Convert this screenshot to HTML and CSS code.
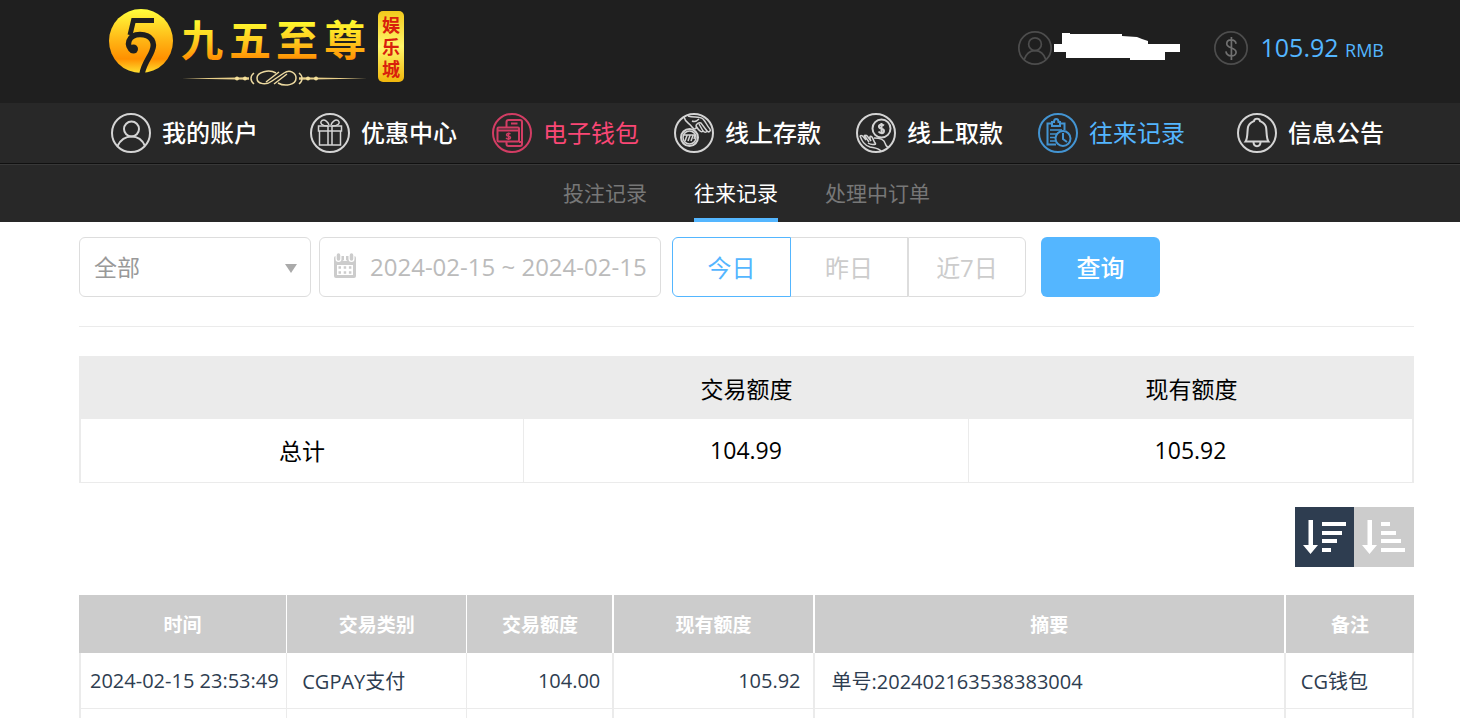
FILE: index.html
```html
<!DOCTYPE html>
<html lang="zh-CN">
<head>
  <meta charset="UTF-8">
  <meta name="viewport" content="width=device-width, initial-scale=1.0">
  <title>九五至尊娱乐城 - 往来记录</title>
  <link rel="stylesheet" href="styles.css">
</head>
<body>

  <!-- 顶部 -->
  <header class="topbar">
    <a class="logo" href="#" aria-label="九五至尊娱乐城">
      <svg width="300" height="84" viewBox="0 0 300 84">
        <defs>
          <linearGradient id="gold" x1="0" y1="0" x2="0" y2="1">
            <stop offset="0" stop-color="#ffff3c"/>
            <stop offset="0.5" stop-color="#ffb414"/>
            <stop offset="0.78" stop-color="#ff9000"/>
            <stop offset="1" stop-color="#ffe030"/>
          </linearGradient>
          <linearGradient id="goldText" gradientUnits="userSpaceOnUse" x1="0" y1="14" x2="0" y2="56">
            <stop offset="0" stop-color="#ffff30"/>
            <stop offset="0.5" stop-color="#ffcf20"/>
            <stop offset="1" stop-color="#ff8a00"/>
          </linearGradient>
          <linearGradient id="plate" x1="0" y1="0" x2="0" y2="1">
            <stop offset="0" stop-color="#f2c91c"/>
            <stop offset="0.5" stop-color="#fff66a"/>
            <stop offset="1" stop-color="#f0b60c"/>
          </linearGradient>
        </defs>
        <circle cx="32" cy="36" r="32" fill="url(#gold)"/>
        <g fill="none" stroke="#1f1f1f">
          <path d="M45 15.500H24.500L21 30" stroke-width="5"/>
          <path d="M24 46C16 41 19 29.500 31 29.500C43 29.500 46.500 38 43 46C41 52 35 58 33 69" stroke-width="5.500"/>
        </g>
        <circle cx="24.500" cy="44" r="4.500" fill="#1f1f1f"/>
        <g class="logo-name" fill="url(#goldText)">
          <text x="72" y="51">九</text>
          <text x="120" y="51">五</text>
          <text x="167" y="51">至</text>
          <text x="215" y="51">尊</text>
        </g>
        <path d="M73 73.500L140 72.300V74.700ZM258 73.500L190 72.300V74.700Z" fill="#e8cf8a"/>
        <g fill="none" stroke="#ecd9a0" stroke-width="1.500">
          <path d="M167 68C160 64 148 67 148 73C148 80 158 80 163 76L175 68C181 64 187 68 187 73C187 80 176 82 169 78"/>
          <path d="M157 77L170 67M165 79L178 69"/>
          <path d="M145 68C141 71 141 76 145 79M190 68C194 71 194 76 190 79"/>
        </g>
        <g fill="#f4e09a">
          <circle cx="128" cy="73.500" r="2"/><circle cx="136" cy="73.500" r="2"/>
          <circle cx="199" cy="73.500" r="2"/><circle cx="207" cy="73.500" r="2"/>
        </g>
        <rect x="269" y="6" width="26" height="71" rx="5" fill="url(#plate)"/>
        <g class="logo-tag">
          <text x="273" y="27">娱</text>
          <text x="273" y="49">乐</text>
          <text x="273" y="71">城</text>
        </g>
      </svg>
    </a>

    <div class="account">
      <svg class="round-icon" viewBox="0 0 40 40" width="34" height="34">
        <circle cx="20" cy="20" r="19"/>
        <circle cx="20" cy="15.500" r="7.500"/>
        <path d="M7 34C10 25 15 23 20 23S30 25 33 34"/>
      </svg>
      <svg class="masked-name" viewBox="0 0 126 28" width="126" height="28">
        <path d="M8 0H16V1H68V3L83 4L88 6L94 8V11H126V19H111V27H76V25H12V19H0V11H8Z" fill="#fff"/>
      </svg>
      <svg class="round-icon money" viewBox="0 0 40 40" width="34" height="34">
        <circle cx="20" cy="20" r="19"/>
        <path d="M26 15C25 9 15 9 15 15S26 19 26 25S15 31 14 24M20.500 7V34"/>
      </svg>
      <span class="balance">105.92 <small>RMB</small></span>
    </div>
  </header>

  <!-- 主导航 -->
  <nav class="main-nav">
    <a href="#">
      <svg viewBox="0 0 40 40" width="40" height="40">
        <circle cx="20" cy="20" r="19"/>
        <circle cx="20.500" cy="16" r="7.500"/>
        <path d="M6.500 33C10 26 15 23.500 20.500 23.500S31 26 34 33"/>
      </svg>
      <span>我的账户</span>
    </a>
    <a href="#">
      <svg viewBox="0 0 40 40" width="40" height="40">
        <circle cx="20" cy="20" r="19"/>
        <g class="thin">
          <path d="M8.500 13H31.500V18H8.500ZM9.500 18V32H30.500V18M18 13V32M22 13V32"/>
          <path d="M18 13C12 13 9 10 12 7.500C15 6 18 9 19 12M22 13C28 13 31 10 28 7.500C25 6 22 9 21 12"/>
        </g>
      </svg>
      <span>优惠中心</span>
    </a>
    <a class="wallet" href="#">
      <svg viewBox="0 0 40 40" width="40" height="40">
        <circle cx="20" cy="20" r="19"/>
        <path d="M14.500 14V9Q14.500 7 16.500 7H28Q30 7 30 9V31Q30 33 28 33H16.500Q14.500 33 14.500 31V28.500M27 29H30M19 10.500H25.500"/>
        <rect x="5.500" y="14.500" width="21.500" height="14" rx="1"/>
        <path d="M5.500 17.500H27"/>
        <path class="thin" d="M18.500 21C17 20 14.500 20 14.500 22S18.500 22.500 18.500 24.500S15.500 26.500 14 25M16.500 19.500V27"/>
      </svg>
      <span>电子钱包</span>
    </a>
    <a href="#">
      <svg viewBox="0 0 40 40" width="40" height="40">
        <circle cx="20" cy="20" r="19"/>
        <circle cx="15.500" cy="24.500" r="8.500"/>
        <g class="thin">
          <circle cx="15.500" cy="24.500" r="6.500"/>
          <path d="M10 22H21M11 28L13 22.500M14 28L16 22.500M17 28L19 22.500M20 26L21 22.500"/>
          <path d="M10 4C11 9 15 10 18 14C21 18 23 15 22 13C25 18 28 20 29 18C31 20 33 19 33 18C35 20 37 18 36 16"/>
          <path d="M14 3C20 5 25 3 29 6C32 9 33 13 36 16M22 13C22 11 25 9 27 10L33 18M25 11L29 18M18 8C20 9 23 8 25 6"/>
        </g>
      </svg>
      <span>线上存款</span>
    </a>
    <a href="#">
      <svg viewBox="0 0 40 40" width="40" height="40">
        <circle cx="20" cy="20" r="19"/>
        <circle cx="25.500" cy="15.500" r="9"/>
        <path d="M28 12.500C26 11 22.500 11.500 23 14S28 15 28 18S24 20.500 22.500 18.500M25.500 10V21"/>
        <g class="thin">
          <path d="M4 23C6 21 8 25 10 27C7 22 10 21 12 24L15 28C13 24 14 22 16 24C18 27 18 30 20 31"/>
          <path d="M4 23C6 28 8 32 14 34C18 35 22 35 25 38M18 25C23 25 28 26 29 30C30 33 31 34 32 34M8 22L13 29M12 30C15 32 17 32 20 31"/>
        </g>
      </svg>
      <span>线上取款</span>
    </a>
    <a class="current" href="#">
      <svg viewBox="0 0 40 40" width="40" height="40">
        <circle cx="20" cy="20" r="19"/>
        <path d="M18 31.500H9.500V10.500H14V13H22V10.500H26.500V17M14 10.500V9H16C16 5 20.500 5 20.500 9H22V10.500"/>
        <path class="thin" d="M12 17H24M12 21H19M12 24.500H17M12 28H17"/>
        <circle cx="25" cy="25.500" r="7.500"/>
        <path d="M25 20V26L29 29"/>
      </svg>
      <span>往来记录</span>
    </a>
    <a href="#">
      <svg viewBox="0 0 40 40" width="40" height="40">
        <circle cx="20" cy="20" r="19"/>
        <path d="M8.500 28.500C11 25 10 19 11 14C12 10 15 9 17 8C17.500 5 22.500 5 23 8C25 9 28 10 29 14C30 19 29 25 31.500 28.500Z"/>
        <path d="M16.500 29C16.500 34.500 23.500 34.500 23.500 29"/>
      </svg>
      <span>信息公告</span>
    </a>
  </nav>

  <nav class="sub-nav">
    <a href="#">投注记录</a>
    <a class="active" href="#">往来记录</a>
    <a href="#">处理中订单</a>
  </nav>

  <main class="content">
    <!-- 查询条件 -->
    <form class="filters">
      <div class="select-box">
        <select aria-label="交易类别">
          <option>全部</option>
        </select>
      </div>
      <label class="date-box">
        <svg viewBox="0 0 26 26" width="26" height="26">
          <rect x="2" y="3" width="22" height="22" rx="2" fill="#ccc"/>
          <rect x="5" y="12" width="16" height="10" fill="#fff"/>
          <path d="M6.500 14.500H19.500M6.500 19.500H19.500" stroke="#ccc" stroke-width="2.500" stroke-dasharray="2.500 2.700"/>
          <path d="M6.500 2V6M13 1V5M19.500 2V6" stroke="#fff" stroke-width="6" stroke-linecap="round"/>
          <path d="M6.500 2V6M19.500 2V6" stroke="#ccc" stroke-width="3.500" stroke-linecap="round"/>
          <path d="M11 3V7M15 3V7" stroke="#ccc" stroke-width="2"/>
        </svg>
        <input type="text" value="2024-02-15 ~ 2024-02-15" aria-label="日期">
      </label>
      <div class="range">
        <button type="button" class="on">今日</button>
        <button type="button">昨日</button>
        <button type="button">近7日</button>
      </div>
      <button type="submit" class="query">查询</button>
    </form>

    <table class="summary">
      <thead>
        <tr><th></th><th>交易额度</th><th>现有额度</th></tr>
      </thead>
      <tbody>
        <tr><td>总计</td><td>104.99</td><td>105.92</td></tr>
      </tbody>
    </table>

    <div class="sort">
      <button type="button" class="desc" aria-label="降序">
        <svg viewBox="0 0 60 60" width="60" height="60">
          <path d="M13.500 13H18V38H23L15.500 47L8 38H13.500Z"/>
          <path d="M27 15H51V19H27ZM27 24H47V28H27ZM27 32H42V36H27ZM27 41H36V45H27Z"/>
        </svg>
      </button>
      <button type="button" class="asc" aria-label="升序">
        <svg viewBox="0 0 60 60" width="60" height="60">
          <path d="M13.500 13H18V38H23L15.500 47L8 38H13.500Z"/>
          <path d="M27 15H36V19H27ZM27 24H42V28H27ZM27 32H47V36H27ZM27 41H51V45H27Z"/>
        </svg>
      </button>
    </div>

    <!-- 往来明细 -->
    <table class="records">
      <colgroup>
        <col class="c-time"><col class="c-type"><col class="c-amount">
        <col class="c-balance"><col class="c-summary"><col class="c-note">
      </colgroup>
      <thead>
        <tr>
          <th>时间</th><th>交易类别</th><th>交易额度</th><th>现有额度</th><th>摘要</th><th>备注</th>
        </tr>
      </thead>
      <tbody>
        <tr>
          <td>2024-02-15 23:53:49</td>
          <td>CGPAY支付</td>
          <td class="num">104.00</td>
          <td class="num">105.92</td>
          <td>单号:202402163538383004</td>
          <td>CG钱包</td>
        </tr>
        <tr>
          <td></td><td></td><td></td><td></td><td></td><td></td>
        </tr>
      </tbody>
    </table>
  </main>

</body>
</html>
```

FILE: styles.css
```css
* {
  box-sizing: border-box;
}

html {
  scrollbar-width: none;
}

body {
  margin: 0;
  background: #fff;
  font-family: "Open Sans", "Noto Sans CJK SC", sans-serif;
  color: #000;
}

a {
  text-decoration: none;
}

button, input, select {
  font-family: inherit;
}

/* 顶部 */
.topbar {
  display: flex;
  justify-content: space-between;
  align-items: flex-start;
  height: 103px;
  padding: 5px 76px 0 109px;
  background: #1f1f1f;
}

.logo svg {
  display: block;
}

.logo-name {
  font: 700 42px "Noto Sans CJK SC", sans-serif;
}

.logo-tag {
  font: 700 18px "Noto Sans CJK SC", sans-serif;
  fill: #d8200c;
}

.account {
  display: flex;
  align-items: center;
  height: 86px;
}

.round-icon {
  fill: none;
  stroke: #4d4d4d;
  stroke-width: 2;
}

.money {
  margin: 0 13px 0 34px;
}

.money path {
  stroke: #707070;
}

.masked-name {
  margin-left: 2px;
  margin-bottom: 2px;
}

.balance {
  padding-bottom: 2px;
  font-size: 25px;
  color: #54b6ff;
}

.balance small {
  font-size: 18px;
}

/* 导航 */
.main-nav {
  display: flex;
  justify-content: space-between;
  align-items: center;
  height: 61px;
  padding: 0 76px 0 111px;
  background: #282828;
  border-bottom: 1px solid #101010;
}

.main-nav a {
  display: flex;
  align-items: center;
  gap: 11px;
  font-size: 24px;
  font-weight: 500;
  color: #fff;
}

.main-nav span {
  padding-bottom: 3px;
}

.main-nav a:first-child {
  margin-right: 17px;
}

.main-nav a:last-child {
  margin-left: 17px;
}

.main-nav svg {
  fill: none;
  stroke: #d4d4d4;
  stroke-width: 2;
}

.main-nav svg .thin {
  stroke-width: 1.5;
}

.main-nav .wallet {
  font-weight: 400;
  color: #fa4775;
}

.main-nav .wallet svg {
  stroke: #d23d64;
}

.main-nav .current {
  font-weight: 400;
  color: #54b6ff;
}

.main-nav .current svg {
  stroke: #4394d2;
}

.sub-nav {
  display: flex;
  justify-content: center;
  gap: 47px;
  height: 58px;
  padding: 0 46px 0 79px;
  background: #282828;
  border-top: 1px solid #383838;
}

.sub-nav a {
  font-size: 21px;
  line-height: 57px;
  color: #777;
}

.sub-nav .active {
  color: #fff;
  border-bottom: 4px solid #54b6ff;
}

/* 内容 */
.content {
  padding: 15px 46px 0 79px;
}

.filters {
  display: flex;
  padding-bottom: 29px;
  border-bottom: 1px solid #ebebeb;
}

.filters button {
  width: 118px;
  height: 60px;
  padding: 0 0 2px;
  font-size: 24px;
}

.select-box {
  position: relative;
  width: 232px;
  margin-right: 8px;
}

.select-box::after {
  content: "";
  position: absolute;
  right: 14px;
  top: 27px;
  border: 6px solid transparent;
  border-top: 9px solid #aaa;
  border-bottom: 0;
  pointer-events: none;
}

.select-box select {
  width: 100%;
  height: 60px;
  padding: 0 14px;
  border: 1px solid #ddd;
  border-radius: 6px;
  background: #fff;
  font-size: 23px;
  color: #999;
  appearance: none;
}

.date-box {
  display: flex;
  align-items: center;
  gap: 12px;
  width: 342px;
  height: 60px;
  margin-right: 11px;
  padding: 0 0 2px 12px;
  border: 1px solid #ddd;
  border-radius: 6px;
}

.date-box input {
  flex: 1;
  min-width: 0;
  padding: 0;
  border: 0;
  background: none;
  font-size: 24px;
  color: #bbb;
}

.range {
  display: flex;
  margin-right: 15px;
}

.range button {
  border: 1px solid #ddd;
  border-left-width: 0;
  background: #fff;
  color: #ccc;
}

.range button:nth-child(2) {
  width: 117px;
}

.range button:last-child {
  border-left-width: 1px;
  border-radius: 0 6px 6px 0;
}

.range .on {
  width: 119px;
  border: 1px solid #54b6ff;
  border-radius: 6px 0 0 6px;
  color: #54b6ff;
}

.filters .query {
  width: 119px;
  border: 0;
  border-radius: 6px;
  background: #54b6ff;
  color: #fff;
  font-weight: 500;
}

table {
  width: 100%;
  table-layout: fixed;
  border-collapse: separate;
  border-spacing: 0;
}

.summary {
  margin-top: 29px;
  font-size: 23px;
  text-align: center;
}

.summary th {
  height: 63px;
  padding: 0;
  background: #ebebeb;
  font-weight: 400;
}

.summary td {
  height: 64px;
  padding: 0 0 2px;
  border-right: 1px solid #ebebeb;
  border-bottom: 1px solid #ebebeb;
}

.summary td:first-child {
  border-left: 2px solid #ebebeb;
}

.summary td:last-child {
  border-right-width: 2px;
}

/* 排序 */
.sort {
  display: flex;
  justify-content: flex-end;
  margin: 24px 0 28px;
}

.sort button {
  width: 60px;
  height: 60px;
  padding: 0;
  border: 0;
  background: #ccc;
}

.sort .desc {
  width: 59px;
  background: #2e3d50;
}

.sort svg {
  display: block;
  fill: #fff;
}

/* 明细表 */
.records {
  font-size: 20px;
  color: #2e3d50;
}

.c-time { width: 15.6%; }
.c-type { width: 13.5%; }
.c-amount { width: 11%; }
.c-balance { width: 15%; }
.c-summary { width: 35.3%; }
.c-note { width: 9.6%; }

.records th {
  height: 58px;
  padding: 0;
  background: #ccc;
  border-right: 1px solid #fff;
  font-size: 19px;
  color: #fff;
}

.records th:nth-child(n+3) {
  border-right-width: 2px;
}

.records th:last-child {
  border-right: 0;
}

.records td {
  height: 56px;
  padding: 0 12px 0 15px;
  border-right: 1px solid #ebebeb;
  border-bottom: 1px solid #ebebeb;
  white-space: nowrap;
}

.records td:nth-child(n+3) {
  border-right-width: 2px;
}

.records td:first-child {
  padding: 0 0 0 9px;
  border-left: 2px solid #ebebeb;
}

.records td:nth-child(5) {
  padding-left: 17px;
}

.records .num {
  text-align: right;
}
```
